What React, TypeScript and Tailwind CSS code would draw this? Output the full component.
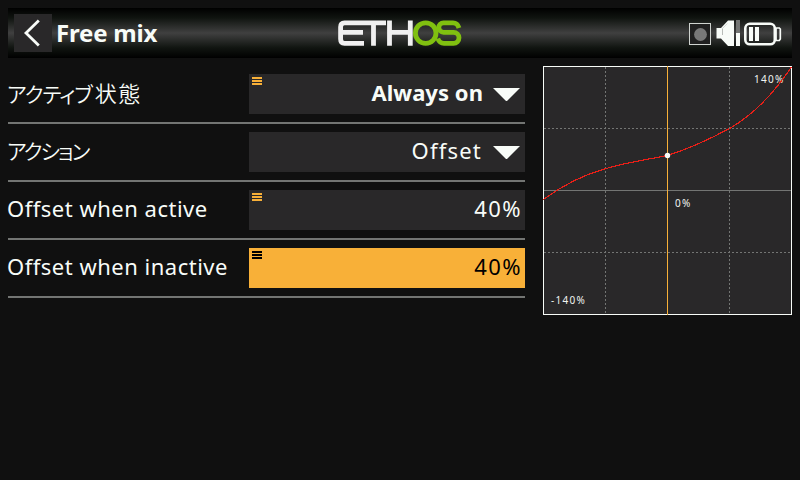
import React from "react";

type RowProps = {
  label: React.ReactNode;
  value: string;
  bold?: boolean;
  source?: boolean;
  select?: boolean;
  focused?: boolean;
};

function SourceMark({ dark }: { dark?: boolean }) {
  const bar = dark ? "h-0.5 w-2.5 bg-black" : "h-0.5 w-2.5 bg-[#f8b038]";
  return (
    <span className="mt-[3px] flex flex-col gap-px self-start">
      <i className={bar} />
      <i className={bar} />
      <i className={bar} />
    </span>
  );
}

function Kana({ children, tight }: { children: string; tight?: boolean }) {
  return (
    <span
      className={
        tight
          ? "font-['Noto_Sans_CJK_JP',sans-serif] text-[21px] font-[350] tracking-[-1.9px] [font-feature-settings:'palt']"
          : "mr-[3px] font-['Noto_Sans_CJK_JP',sans-serif] text-[21px] font-[350] tracking-[-1px] [font-feature-settings:'palt']"
      }
    >
      {children}
    </span>
  );
}

function Kanji({ children }: { children: string }) {
  return (
    <span className="font-['Noto_Sans_CJK_JP',sans-serif] text-[22px] font-[350] tracking-[1.5px]">
      {children}
    </span>
  );
}

function Row({ label, value, bold, source, select, focused }: RowProps) {
  return (
    <div className="flex h-[58px] items-center border-b-2 border-[#737573]">
      <div className="-ml-px flex h-10 w-[242px] items-baseline pr-1 text-[22px] leading-9 tracking-[0.5px] whitespace-nowrap">
        {label}
      </div>
      <div
        className={
          focused
            ? "flex h-10 flex-1 items-center justify-between bg-[#f8b038] px-[3px] text-black"
            : "flex h-10 flex-1 items-center justify-between bg-[#292829] px-[3px]"
        }
      >
        {source ? <SourceMark dark={focused} /> : <span />}
        <span className="flex items-center">
          <span
            className={
              bold
                ? "h-10 text-[22px] leading-9 font-bold tracking-[0.05px]"
                : select
                  ? "-mr-px h-10 pr-0.5 text-[22px] leading-9 tracking-[1.2px]"
                  : "h-10 text-[22px] leading-9 tracking-[1.4px]"
            }
          >
            {value}
          </span>
          {select && (
            <svg className="mr-[2px] ml-[10px]" width="27" height="13" viewBox="0 0 27 13">
              <path d="M0 0H27L13.5 13.5Z" fill="#f8fcf8" />
            </svg>
          )}
        </span>
      </div>
    </div>
  );
}

function Logo() {
  return (
    <svg width="124" height="26" viewBox="0 0 124 26" fill="none" strokeWidth="4.8">
      <g stroke="#f0f0f0">
        <path d="M48 2.9H6.5Q2.6 2.9 2.6 7V19Q2.6 23.300 6.500 23.300H26M2.600 12.300H25" />
        <path d="M35.500 2.500V25.700M51.500 0.500V25.700M72.300 0.500V25.700M51.500 12.300H72.300" />
      </g>
      <g stroke="#80c010">
        <ellipse cx="87.700" cy="13.100" rx="10.300" ry="10.300" />
        <path d="M121 8Q119.500 2.900 115 2.900H105.500A4.700 4.700 0 0 0 105.500 12.300H115.500A5.500 5.500 0 0 1 115.500 23.300H106Q101.500 23.300 99.800 18.500" />
      </g>
    </svg>
  );
}

function StatusIcons() {
  return (
    <svg width="94" height="28" viewBox="688 19 94 28">
      <rect x="689.500" y="23.500" width="21" height="21" fill="#202020" stroke="#d0d4d0" />
      <circle cx="700.500" cy="34.500" r="6.400" fill="#787878" />
      <path d="M716.500 28H721L728 20.500H734V46H728L721 38.500H716.500Z" fill="#f8fcf8" />
      <path d="M722.500 28.500V35" stroke="#b8bcb8" />
      <path d="M722.500 28.500L727.500 23.500" stroke="#c8ccc8" strokeWidth="0.700" />
      <path d="M736 20H740V33H736Z" fill="#737573" />
      <path d="M736 33H740V46H736Z" fill="#f8fcf8" />
      <rect x="745.300" y="23.800" width="29.500" height="20.500" rx="4.500" fill="none" stroke="#f8fcf8" strokeWidth="2.600" />
      <path d="M776 28H779.300L780.300 29V39L779.300 40.500H776Z" fill="none" stroke="#f8fcf8" strokeWidth="1.700" />
      <path d="M749 27H753V41H749ZM755 27H759V41H755Z" fill="#f8fcf8" />
    </svg>
  );
}

function CurveChart() {
  return (
    <svg
      width="249"
      height="249"
      viewBox="543 66 249 249"
      fontFamily="'Noto Sans', sans-serif"
      fontSize="10"
      letterSpacing="1.300"
      fill="#f0f4f0"
    >
      <rect x="543.500" y="66.500" width="248" height="248" fill="#292829" stroke="#f8fcf8" />
      <path
        d="M605.500 67V314M729.500 67V314M544 128.500H791M544 252.500H791"
        stroke="#737573"
        strokeDasharray="2 2"
      />
      <path d="M544 190.500H791" stroke="#737573" />
      <text x="754" y="83">140%</text>
      <text x="675" y="207">0%</text>
      <text x="551" y="304">-140%</text>
      <path
        d="M543.500 199.500C564 184.500 584 174.500 605.500 168.700C627 162.200 649 159.200 667.500 155.500C690 148.500 710 139 729.500 128.500C755 114 774 93 791.500 67"
        fill="none"
        stroke="#e82018"
        strokeWidth="1.150"
        shapeRendering="crispEdges"
      />
      <path d="M667.500 66V315" stroke="#f8b038" />
      <circle cx="667.500" cy="155.500" r="2.700" fill="#f8fcf8" />
    </svg>
  );
}

export default function App() {
  return (
    <div className="h-[480px] w-[800px] overflow-hidden bg-[#101010] px-2 pt-2 font-['Noto_Sans',sans-serif] text-[#f8fcf8]">
      <header className="grid h-[50px] grid-cols-[1fr_124px_1fr] items-center bg-[linear-gradient(to_bottom,#000_0%,#101410_20%,#404040_50%,#101410_80%,#000_100%)]">
        <div className="flex items-center pl-1.5">
          <button className="flex size-[38px] items-center justify-center bg-[#292829]" aria-label="Back">
            <svg width="38" height="38" viewBox="0 0 38 38" fill="none" stroke="#f8fcf8" strokeWidth="2.800">
              <path d="M24.800 6.500L12 19L24.800 31.500" />
            </svg>
          </button>
          <h1 className="ml-1 text-[24px] leading-[38px] font-bold tracking-[-0.2px] whitespace-nowrap">Free mix</h1>
        </div>
        <Logo />
        <div className="flex justify-end pr-[10px]">
          <StatusIcons />
        </div>
      </header>
      <main className="flex justify-between pt-2">
        <section className="w-[517px]">
          <Row
            label={
              <>
                <Kana>アクティブ</Kana>
                <Kanji>状態</Kanji>
              </>
            }
            value="Always on"
            bold
            source
            select
          />
          <Row label={<Kana tight>アクション</Kana>} value="Offset" select />
          <Row label="Offset when active" value="40%" source />
          <Row label="Offset when inactive" value="40%" source focused />
        </section>
        <CurveChart />
      </main>
    </div>
  );
}
